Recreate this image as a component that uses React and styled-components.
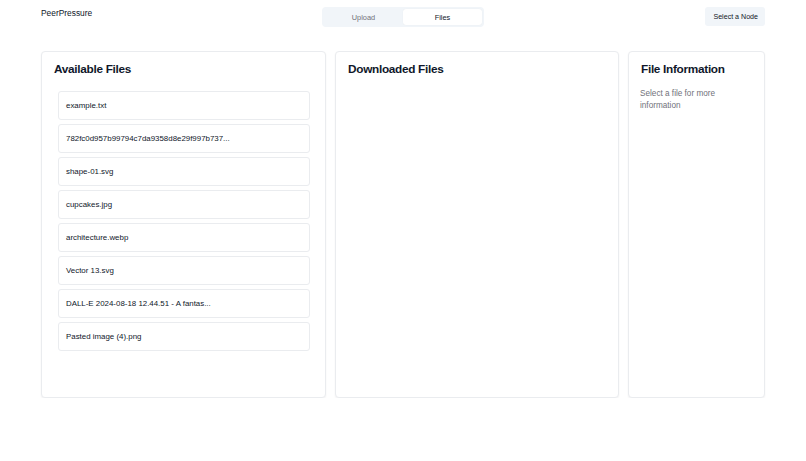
import React from "react";
import styled, { createGlobalStyle } from "styled-components";

const GlobalStyle = createGlobalStyle`
  html, body {
    margin: 0;
    padding: 0;
    background: #ffffff;
    font-family: "Liberation Sans", Arial, Helvetica, sans-serif;
    color: #0f172a;
  }
  * { box-sizing: border-box; }
`;

const Page = styled.div`
  padding: 7px 41px 0 41px;
`;

const Header = styled.header`
  display: grid;
  grid-template-columns: 1fr auto 1fr;
  align-items: start;
  height: 44px;
`;

const Brand = styled.div`
  font-size: 8.4px;
  line-height: 12px;
  color: #0f172a;
`;

const Tabs = styled.div`
  display: flex;
  width: 162px;
  height: 20px;
  padding: 2px;
  background: #f1f5f9;
  border-radius: 4px;
`;

const Tab = styled.div`
  flex: 1;
  display: flex;
  align-items: center;
  justify-content: center;
  font-size: 7.4px;
  border-radius: 3px;
  color: ${({ $active }) => ($active ? "#0f172a" : "#71717a")};
  background: ${({ $active }) => ($active ? "#ffffff" : "transparent")};
  box-shadow: ${({ $active }) =>
    $active ? "0 0 1px rgba(0,0,0,0.08)" : "none"};
`;

const NodeButton = styled.button`
  justify-self: end;
  height: 19px;
  padding: 0 7px 0 8px;
  border: none;
  border-radius: 3px;
  background: #f1f5f9;
  color: #111827;
  font-family: inherit;
  font-size: 7.1px;
`;

const Columns = styled.main`
  display: grid;
  grid-template-columns: 285px 284px 137px;
  gap: 9px;
`;

const Panel = styled.section`
  height: 347px;
  padding: 11px 12px;
  border: 1px solid #eaecef;
  border-radius: 4px;
  box-shadow: 0 1px 2px rgba(0, 0, 0, 0.05);
  background: #ffffff;
`;

const Title = styled.h2`
  margin: 0 0 16px 0;
  font-size: 11.8px;
  line-height: 12px;
  font-weight: 700;
  letter-spacing: -0.3px;
  color: #0f172a;
`;

const FileList = styled.div`
  display: flex;
  flex-direction: column;
  gap: 4px;
  padding: 0 3px 0 4px;
`;

const FileItem = styled.div`
  height: 29px;
  display: flex;
  align-items: center;
  padding: 0 7px;
  border: 1px solid #eaecef;
  border-radius: 3px;
  font-size: 7.9px;
  color: #0f172a;
  white-space: nowrap;
  overflow: hidden;
`;

const Hint = styled.p`
  margin: -3px 0 0 -1px;
  font-size: 8.2px;
  line-height: 12px;
  color: #71717a;
`;

const files = [
  "example.txt",
  "782fc0d957b99794c7da9358d8e29f997b737...",
  "shape-01.svg",
  "cupcakes.jpg",
  "architecture.webp",
  "Vector 13.svg",
  "DALL-E 2024-08-18 12.44.51 - A fantas...",
  "Pasted image (4).png",
];

export default function App() {
  return (
    <>
      <GlobalStyle />
      <Page>
        <Header>
          <Brand>PeerPressure</Brand>
          <Tabs>
            <Tab>Upload</Tab>
            <Tab $active>Files</Tab>
          </Tabs>
          <NodeButton>Select a Node</NodeButton>
        </Header>
        <Columns>
          <Panel>
            <Title>Available Files</Title>
            <FileList>
              {files.map((f) => (
                <FileItem key={f}>{f}</FileItem>
              ))}
            </FileList>
          </Panel>
          <Panel>
            <Title>Downloaded Files</Title>
          </Panel>
          <Panel>
            <Title>File Information</Title>
            <Hint>Select a file for more information</Hint>
          </Panel>
        </Columns>
      </Page>
    </>
  );
}
